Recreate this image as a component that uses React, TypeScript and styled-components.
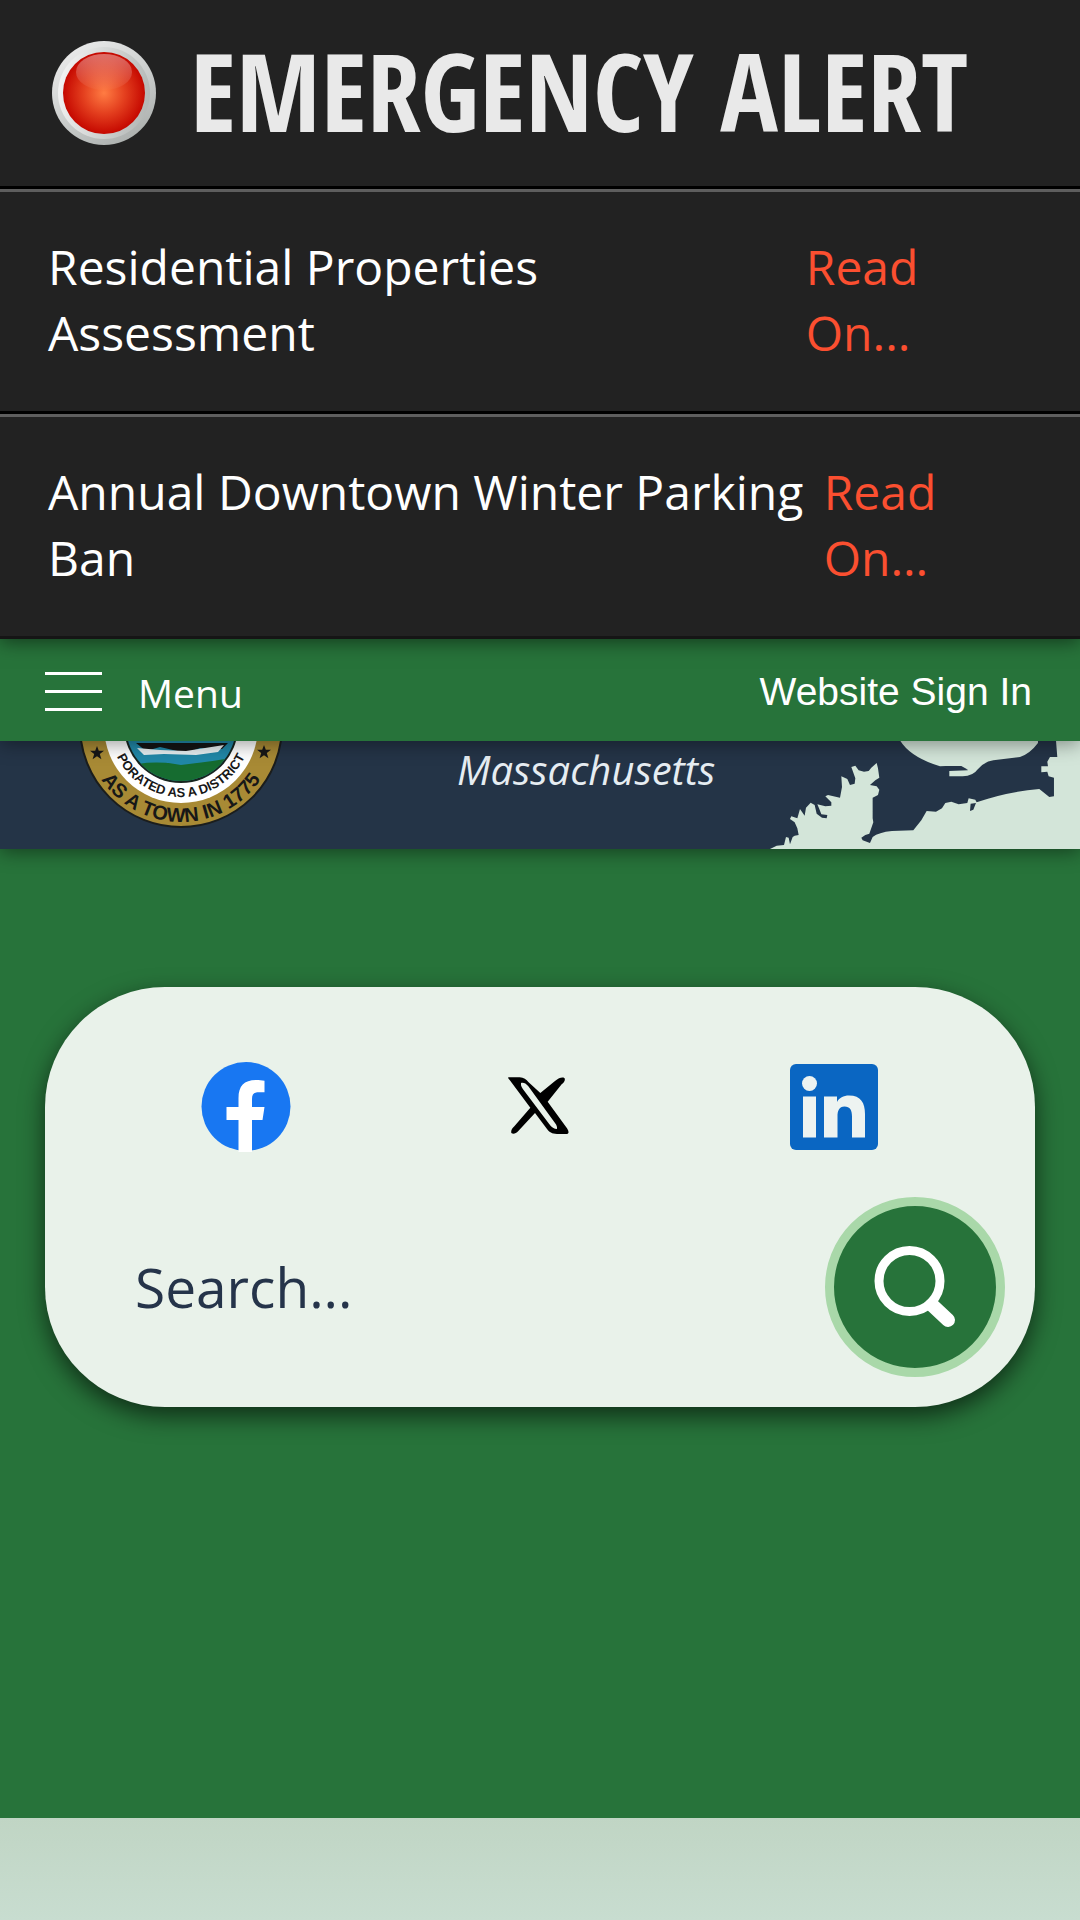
import React from 'react';
import styled, { createGlobalStyle } from 'styled-components';

const green = '#27733a';
const navy = '#243447';
const land = '#d3e5d9';
const sans = '"Open Sans", "Noto Sans", sans-serif';
const arial = '"Liberation Sans", Arial, sans-serif';

const GlobalStyle = createGlobalStyle`
  *, *::before, *::after { box-sizing: border-box; }
  body { margin: 0; background: ${green}; font-family: ${sans}; }
  button, input { font: inherit; }
`;

const Page = styled.div`
  display: flex;
  flex-direction: column;
  min-height: 100vh;
`;

const Alerts = styled.section`
  position: relative;
  z-index: 3;
  background: #222;
  box-shadow: 0 3px 18px rgba(0, 0, 0, 0.5);
`;

const AlertHeader = styled.header`
  display: flex;
  align-items: center;
  gap: 30px;
  padding: 18px 48px;
  border-bottom: 3px solid #000;
`;

const AlertTitle = styled.h1`
  margin: 0;
  padding-bottom: 4px;
  color: #e9e9e9;
  font: 700 108px/146px "Open Sans Condensed", "Open Sans", sans-serif;
  white-space: nowrap;
`;

const AlertList = styled.ul`
  margin: 0;
  padding: 0;
  list-style: none;
`;

const AlertItem = styled.li`
  display: flex;
  padding: 42px 48px 45px;
  border-top: 3px solid #5e5e5e;
  border-bottom: 3px solid #000;
  color: #fff;
  font-size: 48px;
  line-height: 66px;

  &:last-child { border-bottom-color: #151515; }
`;

const AlertLink = styled.a`
  color: #fb4f30;
  text-decoration: none;
`;

const Nav = styled.nav`
  position: relative;
  z-index: 2;
  display: flex;
  align-items: center;
  justify-content: space-between;
  padding: 0 48px 0 45px;
  height: 102px;
  background: ${green};
  box-shadow: 0 3px 18px rgba(0, 0, 0, 0.4);
`;

const MenuButton = styled.button`
  display: flex;
  align-items: center;
  gap: 36px;
  padding: 5px 0 0;
  border: 0;
  background: none;
  color: #fff;
  font-size: 39px;
  line-height: 54px;
`;

const Bars = styled.span`
  display: flex;
  flex-direction: column;
  gap: 15px;
  width: 57px;
  padding-bottom: 2px;

  i { height: 3px; background: #fff; }
`;

const SignIn = styled.a`
  padding-top: 2px;
  color: #fff;
  font: 39px/45px ${arial};
  text-decoration: none;
`;

const Banner = styled.a`
  position: relative;
  z-index: 1;
  display: block;
  background: ${navy};
  box-shadow: 0 3px 18px rgba(0, 0, 0, 0.45);

  svg { display: block; width: 100%; height: auto; }
`;

const Hero = styled.main`
  padding: 138px 45px 411px;
  background: ${green};
`;

const Card = styled.section`
  padding: 75px 30px 30px;
  border-radius: 120px;
  background: #e9f2ea;
  box-shadow: 0 9px 24px rgba(0, 0, 0, 0.6);
`;

const Socials = styled.div`
  display: grid;
  grid-template-columns: repeat(3, 1fr);
  align-items: center;
  justify-items: center;
  padding: 0 24px;
  height: 90px;

  a, svg { display: block; }
`;

const SearchForm = styled.form`
  display: flex;
  align-items: center;
  justify-content: space-between;
  padding-top: 45px;
`;

const SearchInput = styled.input`
  flex: 1;
  min-width: 0;
  padding: 0 0 0 60px;
  border: 0;
  outline: 0;
  background: none;
  color: #25344a;
  font-size: 55px;
  line-height: 78px;

  &::placeholder { color: #25344a; opacity: 1; }
`;

const SearchButton = styled.button`
  display: grid;
  place-items: center;
  width: 180px;
  height: 180px;
  padding: 0;
  border: 9px solid #a9d8a9;
  border-radius: 50%;
  background: ${green};
`;

const Lower = styled.div`
  flex: 1;
  min-height: 102px;
  background: linear-gradient(#c0d5c4, #c8ddd0);
`;

const Beacon = () => (
  <svg width="112" height="112" viewBox="0 0 112 112" aria-hidden="true">
    <defs>
      <linearGradient id="rim" x1="0.2" y1="0" x2="0.8" y2="1">
        <stop offset="0" stopColor="#ececec" />
        <stop offset="0.6" stopColor="#c6c9c8" />
        <stop offset="1" stopColor="#a9adab" />
      </linearGradient>
      <linearGradient id="bevel" x1="0" y1="0.3" x2="1" y2="0.5">
        <stop offset="0" stopColor="#f3f3f3" />
        <stop offset="1" stopColor="#b4b8b6" />
      </linearGradient>
      <radialGradient id="lamp">
        <stop offset="0" stopColor="#ff7c43" />
        <stop offset="0.5" stopColor="#e4401f" />
        <stop offset="1" stopColor="#c50800" />
      </radialGradient>
      <linearGradient id="gloss" x1="0" y1="0" x2="0" y2="1">
        <stop offset="0" stopColor="#fff" stopOpacity="0.4" />
        <stop offset="1" stopColor="#fff" stopOpacity="0.02" />
      </linearGradient>
    </defs>
    <circle cx="56" cy="56" r="52" fill="url(#rim)" />
    <circle cx="56" cy="56" r="46" fill="url(#bevel)" />
    <circle cx="56" cy="56" r="41" fill="url(#lamp)" />
    <ellipse cx="56" cy="35" rx="28" ry="18" fill="url(#gloss)" />
  </svg>
);

const star = 'M0-7L1.8-2.2H7L2.8 1L4.4 6.200L0 3.200L-4.4 6.200L-2.800 1L-7-2.2H-1.800Z';

const BannerArt = () => (
  <svg viewBox="0 0 1080 108" role="img" aria-label="Massachusetts">
    <defs>
      <path id="outer-arc" d="M85 -15A96 96 0 0 0 277 -15" />
      <path id="inner-arc" d="M110 -15A71 71 0 0 0 252 -15" />
      <clipPath id="scene"><circle cx="181" cy="-15" r="55" /></clipPath>
    </defs>
    <circle cx="181" cy="-15" r="101" fill="#a88a35" stroke="#1b1d1c" strokeWidth="2" />
    <circle cx="181" cy="-15" r="77" fill="#fff" />
    <circle cx="181" cy="-15" r="57" fill="#17251f" />
    <g clipPath="url(#scene)">
      <rect x="120" y="-20" width="122" height="60" fill="#2188a8" />
      <path d="M120 27Q150 18 181 24Q215 20 242 15V50H120Z" fill="#166c30" />
      <path d="M136 2H228L222 8L200 7L186 12L160 6L146 10Z" fill="#141414" />
      <path d="M137 7L160 9L186 10L224 4L218 11L196 14L164 13L144 14Z" fill="#e6eef0" />
    </g>
    <g fill="#171717" fontFamily={arial} fontWeight="700">
      <text fontSize="20">
        <textPath href="#outer-arc" startOffset="50%" textAnchor="middle">AS A TOWN IN 1775</textPath>
      </text>
      <text fontSize="13">
        <textPath href="#inner-arc" startOffset="50%" textAnchor="middle">PORATED AS A DISTRICT</textPath>
      </text>
    </g>
    <path d={star} transform="translate(97 12)" fill="#171717" />
    <path d={star} transform="translate(264 11)" fill="#171717" />
    <text x="457" y="44" fill="#e6edf2" fontFamily={sans} fontSize="40" fontStyle="italic">Massachusetts</text>
    <g transform="translate(760 -6) scale(0.3333)" fill={land}>
      <path d="M30 342L50 332L72 330L78 306L86 308L90 328L98 306L104 302L116 300L112 280L104 262L90 252L94 244L112 250L120 222L134 242L138 218L152 203L164 210L170 236L186 248L200 250L202 240L184 238L178 222L172 208L196 214L214 212L214 202L196 184L204 180L240 188L246 156L244 124L262 132L270 150L284 146L286 130L274 96L286 92L296 106L312 110L326 108L334 98L350 84L354 100L358 128L346 136L330 150L350 154L358 164L354 180L338 188L338 250L340 262L328 296L316 300L304 308L308 316L330 324L338 306Q356 292 396 288L460 286L484 256L500 228L528 230L546 220L556 204L574 200L596 208L622 204L626 190L646 194L650 202Q740 170 838 162L868 186L882 184L882 128L866 124L862 110L844 112L844 94L864 94L862 80L870 66L892 66L888 16H962V344H30Z" />
      <path d="M420 16Q450 66 540 94L600 94L624 106L568 108V124H608Q640 122 652 104Q672 80 700 76L780 66Q810 56 834 24V16Z" />
      <path d="M632 206L648 204L640 224L630 228Z" fill={navy} />
      <path d="M540 93L604 93L624 104L600 104L570 98Z" fill={navy} />
    </g>
  </svg>
);

const Facebook = () => (
  <svg width="90" height="90" viewBox="0 0 90 90" aria-hidden="true">
    <circle cx="45" cy="44.5" r="44.5" fill="#1877f2" />
    <path d="M37.5 90V58H25.5V45H37.5V36C37.5 24 43 18 55 18C58 18 61 18.3 63.5 18.7V30.3H58C53 30.3 51 32 51 37V45H63.5L61.5 58H51V90Z" fill="#fff" />
  </svg>
);

const XLogo = () => (
  <svg width="80" height="76" viewBox="3 6 240 228" aria-hidden="true">
    <path d="M28 31L62 31Q80 33 88 45L124 78L168 42C180 32 190 30 196 33C200 37 196 46 188 52L146 104L204 184C212 197 209 201 200 201H174C158 200 152 196 144 186L108 138L58 192C50 201 42 202 37 198C35 190 40 184 46 178L94 122L32 39Q26 33 28 31Z" />
    <path d="M66 48C64 56 70 64 76 72L150 170C158 181 166 186 174 186C176 178 170 170 162 160L88 58C80 49 74 46 66 48Z" fill="#e9f2ea" />
  </svg>
);

const LinkedIn = () => (
  <svg width="88" height="86" viewBox="0 0 88 86" aria-hidden="true">
    <rect width="88" height="86" rx="6" fill="#0a66c2" />
    <g fill="#edf3f1">
      <circle cx="19.5" cy="19.5" r="7.5" />
      <path d="M13 32.5H26V73.5H13ZM34 32.5H47V38C49 34 53.5 31.5 59 31.5C71 31.5 75 39 75 50V73.5H62V52.5C62 46 60 42.5 54.5 42.5S47.5 47 47.5 52.5V73.5H34Z" />
    </g>
  </svg>
);

const Magnifier = () => (
  <svg width="84" height="84" viewBox="0 0 84 84" fill="none" stroke="#fff" aria-hidden="true">
    <circle cx="36.5" cy="36" r="30.5" strokeWidth="9" />
    <path d="M59 60L75 75" strokeWidth="14" strokeLinecap="round" />
    <path d="M55 56L60 61" strokeWidth="12" />
  </svg>
);

const alerts = ['Residential Properties Assessment', 'Annual Downtown Winter Parking Ban'];

const socials = [
  { name: 'Facebook', Icon: Facebook },
  { name: 'X', Icon: XLogo },
  { name: 'LinkedIn', Icon: LinkedIn },
];

export default function App() {
  return (
    <Page>
      <GlobalStyle />
      <Alerts>
        <AlertHeader>
          <Beacon />
          <AlertTitle>EMERGENCY ALERT</AlertTitle>
        </AlertHeader>
        <AlertList>
          {alerts.map((title) => (
            <AlertItem key={title}>
              <span>{title}</span>
              <AlertLink href="#">Read On...</AlertLink>
            </AlertItem>
          ))}
        </AlertList>
      </Alerts>
      <Nav>
        <MenuButton type="button">
          <Bars><i /><i /><i /></Bars>
          Menu
        </MenuButton>
        <SignIn href="#">Website Sign In</SignIn>
      </Nav>
      <Banner href="#"><BannerArt /></Banner>
      <Hero>
        <Card>
          <Socials>
            {socials.map(({ name, Icon }) => (
              <a key={name} href="#" aria-label={name}><Icon /></a>
            ))}
          </Socials>
          <SearchForm role="search" onSubmit={(e) => e.preventDefault()}>
            <SearchInput type="text" aria-label="Search" placeholder="Search..." />
            <SearchButton type="submit" aria-label="Search"><Magnifier /></SearchButton>
          </SearchForm>
        </Card>
      </Hero>
      <Lower />
    </Page>
  );
}
